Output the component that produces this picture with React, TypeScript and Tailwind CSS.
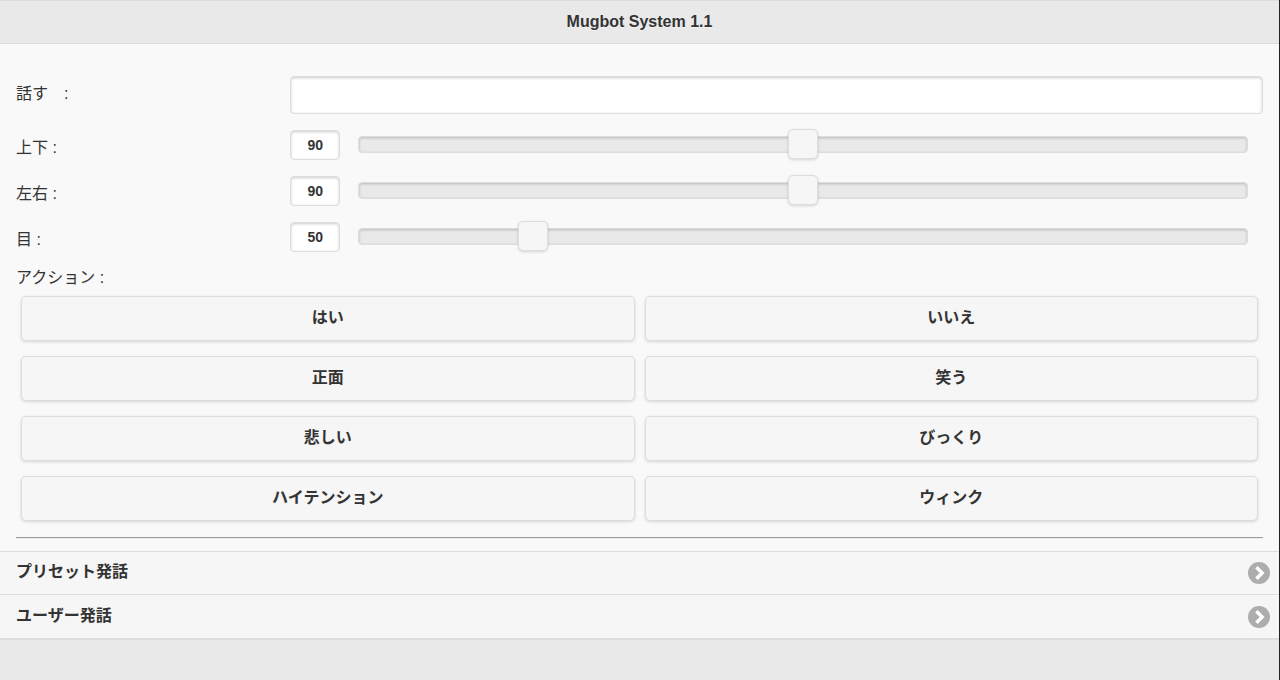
import { useState } from "react";

const actions = [
  "はい",
  "いいえ",
  "正面",
  "笑う",
  "悲しい",
  "びっくり",
  "ハイテンション",
  "ウィンク",
];

const links = ["プリセット発話", "ユーザー発話"];

type SliderRowProps = { id: string; label: string; max: number; initial: number };

function SliderRow({ id, label, max, initial }: SliderRowProps) {
  const [value, setValue] = useState(initial);
  const clamp = (raw: string) => Math.min(max, Math.max(0, Number(raw)));

  return (
    <div className="flex h-[31px]">
      <label htmlFor={id} className="w-[22%] shrink-0 pt-[7px] leading-6">
        {label} :
      </label>
      <input
        id={id}
        type="number"
        min={0}
        max={max}
        value={value}
        onChange={(e) => setValue(clamp(e.target.value))}
        className="h-[30px] w-[50px] shrink-0 self-end rounded border border-[#ddd] bg-white text-center text-sm font-bold shadow-[inset_0_1px_3px_rgba(0,0,0,0.2)] [appearance:textfield] [&::-webkit-inner-spin-button]:appearance-none"
      />
      <div className="ml-[3px] grid h-[30px] min-w-0 flex-1 grid-cols-1">
        <div className="col-start-1 row-start-1 mx-[15px] mt-[7px] h-[17px] rounded border border-[#ddd] bg-[#e9e9e9] shadow-[inset_0_1px_3px_rgba(0,0,0,0.2)]" />
        <input
          type="range"
          aria-label={label}
          min={0}
          max={max}
          value={value}
          onChange={(e) => setValue(clamp(e.target.value))}
          className="col-start-1 row-start-1 h-[30px] w-full cursor-pointer appearance-none bg-transparent [&::-webkit-slider-thumb]:h-[30px] [&::-webkit-slider-thumb]:w-[30px] [&::-webkit-slider-thumb]:appearance-none [&::-webkit-slider-thumb]:rounded-[5px] [&::-webkit-slider-thumb]:border [&::-webkit-slider-thumb]:border-[#ddd] [&::-webkit-slider-thumb]:bg-[#f6f6f6] [&::-webkit-slider-thumb]:shadow-[0_1px_3px_rgba(0,0,0,0.15)]"
        />
      </div>
    </div>
  );
}

function ChevronBadge() {
  return (
    <svg viewBox="0 0 22 22" className="h-[22px] w-[22px]" aria-hidden="true">
      <circle cx="11" cy="11" r="11" fill="#adadad" />
      <path d="M8.4 5.2 14.2 11l-5.8 5.8" fill="none" stroke="#fff" strokeWidth="3.4" />
    </svg>
  );
}

export default function App() {
  return (
    <div className="flex min-h-screen flex-col border-r border-[#1b2230] bg-[#f9f9f9] font-['Liberation_Sans','Noto_Sans_CJK_JP',sans-serif] text-base text-[#333] [text-shadow:0_1px_0_#f3f3f3]">
      <header className="flex h-11 items-center justify-center border-y border-[#ddd] bg-[#e9e9e9]">
        <h1 className="text-base font-bold">Mugbot System 1.1</h1>
      </header>

      <main className="px-4 pt-8">
        <div className="flex">
          <label htmlFor="speech" className="w-[22%] shrink-0 whitespace-pre pt-[6px] leading-6">
            {"話す\u3000:"}
          </label>
          <input
            id="speech"
            type="text"
            className="h-[38px] min-w-0 flex-1 rounded border border-[#ddd] bg-white px-2 shadow-[inset_0_1px_3px_rgba(0,0,0,0.2)]"
          />
        </div>

        <div className="mt-[15px] flex flex-col gap-[15px]">
          <SliderRow id="vertical" label="上下" max={180} initial={90} />
          <SliderRow id="horizontal" label="左右" max={180} initial={90} />
          <SliderRow id="eyes" label="目" max={255} initial={50} />
        </div>

        <p className="mt-[14px] leading-6" id="action-label">
          アクション :
        </p>
        <div
          role="group"
          aria-labelledby="action-label"
          className="mx-[5px] mt-[6px] grid grid-cols-2 gap-x-[10px] gap-y-[15px]"
        >
          {actions.map((action) => (
            <button
              key={action}
              type="button"
              className="h-[45px] cursor-pointer rounded-[5px] border border-[#ddd] bg-[#f6f6f6] pb-[2px] font-bold shadow-[0_1px_3px_rgba(0,0,0,0.15)] [text-shadow:0_1px_0_#f3f3f3]"
            >
              {action}
            </button>
          ))}
        </div>
        <hr className="mt-4 border-t border-b border-t-[#9a9a9a] border-b-[#eee]" />
      </main>

      <nav className="mt-3 border-t border-[#ddd]">
        {links.map((link) => (
          <a
            key={link}
            href="#"
            className="flex h-[43px] items-center justify-between border-b border-[#ddd] bg-[#f6f6f6] pr-[9px] pl-4 font-bold last:h-11"
          >
            <span className="pb-[2px]">{link}</span>
            <ChevronBadge />
          </a>
        ))}
      </nav>

      <footer className="flex-1 border-t border-[#ddd] bg-[#e9e9e9]" />
    </div>
  );
}
